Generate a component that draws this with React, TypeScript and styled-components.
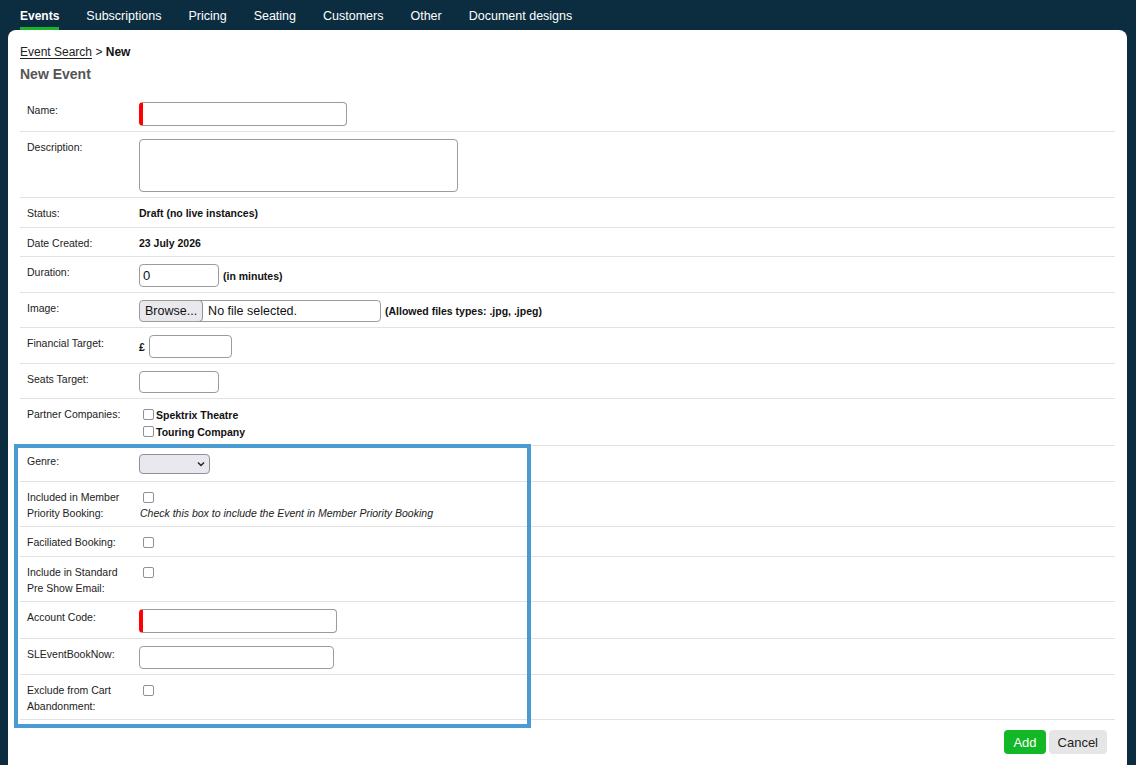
import React from "react";
import styled, { createGlobalStyle, css } from "styled-components";

const GlobalStyle = createGlobalStyle`
  html, body {
    margin: 0;
    padding: 0;
    background: #0b2d3f;
    font-family: "Liberation Sans", Arial, sans-serif;
  }
  * { box-sizing: border-box; }
`;

const NavBar = styled.nav`
  display: flex;
  align-items: stretch;
  gap: 27px;
  height: 30px;
  padding: 0 20px;
`;

const NavItem = styled.a<{ $active?: boolean }>`
  display: flex;
  align-items: center;
  padding-top: 4px;
  font-size: 12.5px;
  color: #ffffff;
  text-decoration: none;
  border-bottom: 3px solid transparent;
  ${(p) =>
    p.$active &&
    css`
      font-weight: 700;
      font-size: 12px;
      border-bottom-color: #19b52a;
    `}
`;

const Card = styled.main`
  margin: 0 9px 0 8px;
  min-height: calc(100vh - 30px);
  background: #ffffff;
  border-radius: 8px 8px 0 0;
  padding: 14px 12px 20px;
  color: #222;
`;

const Breadcrumb = styled.div`
  font-size: 12px;
  line-height: 16px;
  color: #222;
`;

const CrumbLink = styled.a`
  color: #222;
  text-decoration: underline;
  text-underline-offset: 2px;
`;

const CrumbCurrent = styled.b`
  font-weight: 700;
  color: #111;
`;

const Title = styled.h1`
  margin: 5px 0 12px;
  font-size: 14px;
  line-height: 18px;
  font-weight: 700;
  color: #555;
`;

const Form = styled.div`
  display: flex;
  flex-direction: column;
`;

const Group = styled.div`
  position: relative;
  display: flex;
  flex-direction: column;
`;

const Annotation = styled.div`
  position: absolute;
  left: -6px;
  top: -2px;
  width: 517px;
  height: 284px;
  border: 4px solid #4a9bd1;
  pointer-events: none;
`;

const Row = styled.div<{ $roomy?: boolean }>`
  display: grid;
  grid-template-columns: 112px 1fr;
  border-bottom: 1px solid #e2e2e2;
  padding-bottom: ${(p) => (p.$roomy ? 1 : 0)}px;
`;

const Label = styled.div`
  padding: 7px 7px 5px;
  font-size: 10.5px;
  line-height: 16px;
  color: #222;
`;

const Value = styled.div`
  padding: 7px 7px 5px;
  font-size: 10.5px;
  line-height: 16px;
  display: flex;
  align-items: center;
  flex-wrap: wrap;
  align-content: flex-start;
  gap: 4px;
`;

const Stack = styled.div`
  display: flex;
  flex-direction: column;
  align-items: flex-start;
`;

const TextInput = styled.input<{ $width: number; $required?: boolean; $height?: number }>`
  width: ${(p) => p.$width}px;
  height: ${(p) => p.$height ?? 22}px;
  border: 1px solid #9b9b9b;
  border-radius: 4px;
  padding: 0 3px;
  font-family: "Liberation Sans", Arial, sans-serif;
  font-size: 13px;
  color: #111;
  background: #fff;
  outline: none;
  ${(p) =>
    p.$required &&
    css`
      border-left: 4px solid #ff0000;
    `}
`;

const TextArea = styled.textarea`
  width: 319px;
  height: 53px;
  border: 1px solid #9b9b9b;
  border-radius: 4px;
  resize: none;
  outline: none;
  display: block;
`;

const Strong = styled.span`
  font-weight: 700;
  color: #111;
`;

const FileBox = styled.label`
  display: inline-flex;
  align-items: stretch;
  width: 242px;
  height: 22px;
  border: 1px solid #9b9b9b;
  border-radius: 4px;
  overflow: hidden;
  font-family: "Liberation Sans", Arial, sans-serif;
  font-size: 12.5px;
  color: #111;
  cursor: pointer;

  input {
    display: none;
  }
`;

const FileButton = styled.span`
  display: flex;
  align-items: center;
  padding: 0 5px;
  background: #e9e9ed;
  border: 1px solid #8f8f9d;
  border-radius: 4px;
  margin: -1px 0 -1px -1px;
`;

const FileText = styled.span`
  display: flex;
  align-items: center;
  padding-left: 5px;
`;

const Check = styled.input.attrs({ type: "checkbox" })`
  appearance: none;
  width: 11px;
  height: 11px;
  margin: 0 2px 0 4px;
  border: 1px solid #8f8f9d;
  border-radius: 2px;
  background: #fff;
  flex: none;
`;

const CheckLine = styled.label<{ $tight?: boolean }>`
  display: flex;
  align-items: center;
  height: ${(p) => (p.$tight ? 16 : 17)}px;
  font-weight: 700;
  color: #111;
`;

const SelectWrap = styled.div`
  position: relative;
  width: 71px;
  height: 20px;
  margin: 1px 0 2px;
`;

const Select = styled.select`
  appearance: none;
  width: 100%;
  height: 100%;
  background: #e9e9ed;
  border: 1px solid #8f8f9d;
  border-radius: 4px;
  outline: none;
`;

const Chevron = styled.svg`
  position: absolute;
  right: 5px;
  top: 7px;
  pointer-events: none;
`;

const Hint = styled.span`
  font-style: italic;
  color: #222;
  margin-left: 1px;
`;

const Actions = styled.div`
  display: flex;
  justify-content: flex-end;
  gap: 3px;
  margin-top: 10px;
  padding-right: 8px;
`;

const Button = styled.button<{ $primary?: boolean }>`
  height: 24px;
  padding: 0 9px;
  border: none;
  border-radius: 4px;
  font-family: "Liberation Sans", Arial, sans-serif;
  font-size: 13px;
  cursor: pointer;
  background: ${(p) => (p.$primary ? "#12b825" : "#e6e6e6")};
  color: ${(p) => (p.$primary ? "#ffffff" : "#222")};
`;

const CheckValue = () => (
  <Value>
    <CheckLine $tight>
      <Check />
    </CheckLine>
  </Value>
);

export default function App() {
  const tabs = ["Events", "Subscriptions", "Pricing", "Seating", "Customers", "Other", "Document designs"];
  return (
    <>
      <GlobalStyle />
      <NavBar>
        {tabs.map((t, i) => (
          <NavItem key={t} $active={i === 0}>
            {t}
          </NavItem>
        ))}
      </NavBar>
      <Card>
        <Breadcrumb>
          <CrumbLink href="#">Event Search</CrumbLink> &gt; <CrumbCurrent>New</CrumbCurrent>
        </Breadcrumb>
        <Title>New Event</Title>
        <Form>
          <Row>
            <Label>Name:</Label>
            <Value>
              <TextInput $width={208} $height={24} $required />
            </Value>
          </Row>
          <Row>
            <Label>Description:</Label>
            <Value>
              <TextArea />
            </Value>
          </Row>
          <Row $roomy>
            <Label>Status:</Label>
            <Value>
              <Strong>Draft (no live instances)</Strong>
            </Value>
          </Row>
          <Row>
            <Label>Date Created:</Label>
            <Value>
              <Strong>23 July 2026</Strong>
            </Value>
          </Row>
          <Row>
            <Label>Duration:</Label>
            <Value>
              <TextInput $width={80} $height={23} defaultValue="0" />
              <Strong>(in minutes)</Strong>
            </Value>
          </Row>
          <Row>
            <Label>Image:</Label>
            <Value>
              <FileBox>
                <input type="file" accept=".jpg,.jpeg" />
                <FileButton>Browse...</FileButton>
                <FileText>No file selected.</FileText>
              </FileBox>
              <Strong>(Allowed files types: .jpg, .jpeg)</Strong>
            </Value>
          </Row>
          <Row>
            <Label>Financial Target:</Label>
            <Value>
              <Strong>£</Strong>
              <TextInput $width={83} $height={23} />
            </Value>
          </Row>
          <Row>
            <Label>Seats Target:</Label>
            <Value>
              <TextInput $width={80} />
            </Value>
          </Row>
          <Row>
            <Label>Partner Companies:</Label>
            <Value>
              <Stack>
                <CheckLine>
                  <Check />
                  Spektrix Theatre
                </CheckLine>
                <CheckLine>
                  <Check />
                  Touring Company
                </CheckLine>
              </Stack>
            </Value>
          </Row>
          <Group>
            <Row>
              <Label>Genre:</Label>
              <Value>
                <SelectWrap>
                  <Select />
                  <Chevron width="8" height="6" viewBox="0 0 8 6">
                    <path d="M1 1.5 L4 4.5 L7 1.5" fill="none" stroke="#222" strokeWidth="1.4" />
                  </Chevron>
                </SelectWrap>
              </Value>
            </Row>
            <Row>
              <Label>
                Included in Member
                <br />
                Priority Booking:
              </Label>
              <Value>
                <Stack>
                  <CheckLine $tight>
                    <Check />
                  </CheckLine>
                  <Hint>Check this box to include the Event in Member Priority Booking</Hint>
                </Stack>
              </Value>
            </Row>
            <Row $roomy>
              <Label>Faciliated Booking:</Label>
              <CheckValue />
            </Row>
            <Row>
              <Label>
                Include in Standard
                <br />
                Pre Show Email:
              </Label>
              <CheckValue />
            </Row>
            <Row>
              <Label>Account Code:</Label>
              <Value>
                <TextInput $width={198} $height={24} $required />
              </Value>
            </Row>
            <Row>
              <Label>SLEventBookNow:</Label>
              <Value>
                <TextInput $width={195} $height={23} />
              </Value>
            </Row>
            <Row>
              <Label>
                Exclude from Cart
                <br />
                Abandonment:
              </Label>
              <CheckValue />
            </Row>
            <Annotation />
          </Group>
        </Form>
        <Actions>
          <Button $primary>Add</Button>
          <Button>Cancel</Button>
        </Actions>
      </Card>
    </>
  );
}
